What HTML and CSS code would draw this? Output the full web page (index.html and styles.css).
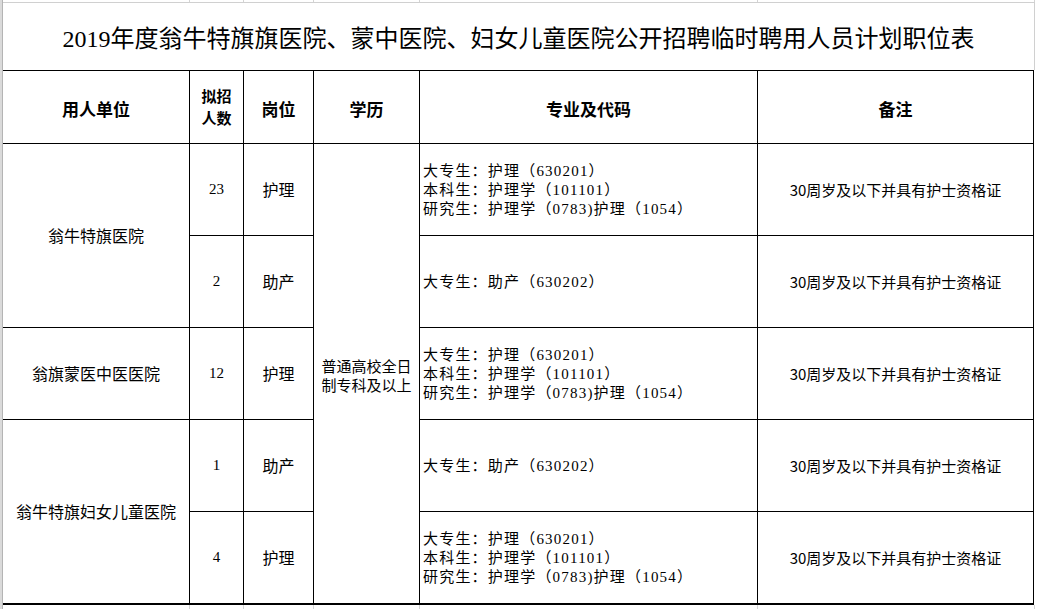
FILE: index.html
```html
<!DOCTYPE html>
<html lang="zh-CN">
<head>
<meta charset="utf-8">
<title>2019年度翁牛特旗旗医院、蒙中医院、妇女儿童医院公开招聘临时聘用人员计划职位表</title>
<link rel="stylesheet" href="styles.css">
</head>
<body>
<div class="sheet">
  <div class="rowhead"></div>
  <div class="content">
    <div class="gridstrip top">
      <span></span><span></span><span></span><span></span><span></span><span></span>
    </div>
    <div class="title">2019年度翁牛特旗旗医院、蒙中医院、妇女儿童医院公开招聘临时聘用人员计划职位表</div>
    <div class="table">
      <div class="cell head">用人单位</div>
      <div class="cell head two"><span class="line">拟招</span><span class="line">人数</span></div>
      <div class="cell head">岗位</div>
      <div class="cell head">学历</div>
      <div class="cell head">专业及代码</div>
      <div class="cell head">备注</div>

      <div class="cell unit span2">翁牛特旗医院</div>
      <div class="cell num">23</div>
      <div class="cell post">护理</div>
      <div class="cell edu span5">普通高校全日<br>制专科及以上</div>
      <div class="cell major">大专生：护理（630201）<br>本科生：护理学（101101）<br>研究生：护理学（0783)护理（1054）</div>
      <div class="cell note">30周岁及以下并具有护士资格证</div>

      <div class="cell num">2</div>
      <div class="cell post">助产</div>
      <div class="cell major">大专生：助产（630202）</div>
      <div class="cell note">30周岁及以下并具有护士资格证</div>

      <div class="cell unit">翁旗蒙医中医医院</div>
      <div class="cell num">12</div>
      <div class="cell post">护理</div>
      <div class="cell major">大专生：护理（630201）<br>本科生：护理学（101101）<br>研究生：护理学（0783)护理（1054）</div>
      <div class="cell note">30周岁及以下并具有护士资格证</div>

      <div class="cell unit span2">翁牛特旗妇女儿童医院</div>
      <div class="cell num">1</div>
      <div class="cell post">助产</div>
      <div class="cell major">大专生：助产（630202）</div>
      <div class="cell note">30周岁及以下并具有护士资格证</div>

      <div class="cell num">4</div>
      <div class="cell post">护理</div>
      <div class="cell major">大专生：护理（630201）<br>本科生：护理学（101101）<br>研究生：护理学（0783)护理（1054）</div>
      <div class="cell note">30周岁及以下并具有护士资格证</div>
    </div>
    <div class="gridstrip bottom">
      <span></span><span></span><span></span><span></span><span></span><span></span>
    </div>
  </div>
</div>
</body>
</html>
```

FILE: styles.css
```css
* {
  box-sizing: border-box;
}

html, body {
  margin: 0;
  padding: 0;
  background: #ffffff;
}

body {
  width: 1037px;
  height: 609px;
  overflow: hidden;
  font-family: "Noto Sans CJK SC", "Liberation Sans", sans-serif;
  color: #000;
}

.sheet {
  display: flex;
  height: 609px;
}

.rowhead {
  width: 3px;
  flex: none;
  background: #dadada;
  border-right: 1px solid #b4b4b4;
}

.content {
  width: 1032px;
  display: flex;
  flex-direction: column;
}

.gridstrip {
  display: grid;
  grid-template-columns: 187px 54px 70px 106px 338px 277px;
}

.gridstrip span {
  border-right: 1px solid #d4d4d4;
}

.gridstrip.top {
  height: 3px;
  border-bottom: 1px solid #d0d0d0;
  width: 1032px;
}

.gridstrip.bottom {
  height: 4px;
  width: 1032px;
}

.title {
  width: 1032px;
  height: 67px;
  border-right: 1px solid #d0d0d0;
  display: flex;
  align-items: center;
  justify-content: center;
  padding-top: 5px;
  font-family: "Liberation Serif", "Noto Sans CJK SC", serif;
  font-size: 24px;
  line-height: 28px;
  white-space: nowrap;
}

.table {
  width: 1031px;
  display: grid;
  grid-template-columns: 187px 54px 70px 106px 338px 276px;
  grid-template-rows: 73px 92px 92px 92px 92px 92px;
  border-top: 1px solid #000;
  border-bottom: 1px solid #000;
}

.cell {
  border-right: 1px solid #000;
  border-bottom: 1px solid #000;
  display: flex;
  align-items: center;
  justify-content: center;
  text-align: center;
  font-size: 16px;
  line-height: 19px;
  white-space: nowrap;
}

.head {
  font-weight: 700;
  font-size: 17px;
  line-height: 20px;
  padding-top: 3px;
}

.head.two {
  flex-direction: column;
  padding-top: 0;
}

.head .line {
  display: block;
  height: 22px;
  line-height: 22px;
  font-size: 15px;
}

.span2 {
  grid-row: span 2;
}

.span5 {
  grid-row: span 5;
}

.num {
  font-family: "Liberation Serif", serif;
  font-size: 15px;
}

.unit {
  font-size: 16px;
}

.post {
  font-size: 16px;
}

.edu {
  font-size: 15px;
  line-height: 19px;
  padding-top: 2px;
}

.major {
  justify-content: flex-start;
  text-align: left;
  padding-left: 3px;
  padding-top: 2px;
  font-family: "Liberation Serif", "Noto Sans CJK SC", serif;
  font-size: 15px;
  letter-spacing: 1.2px;
  line-height: 19px;
}

.note {
  font-size: 15px;
}
```
